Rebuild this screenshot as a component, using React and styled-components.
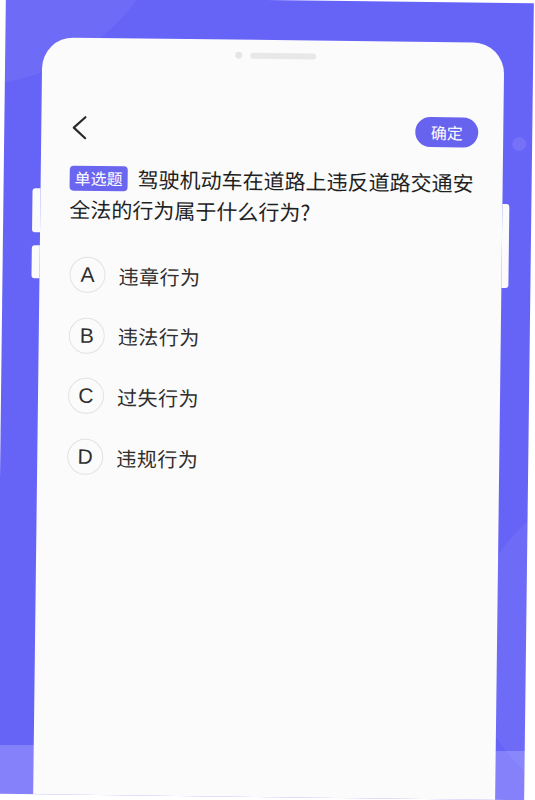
import React from 'react';
import styled, { createGlobalStyle } from 'styled-components';

const GlobalStyle = createGlobalStyle`
  html, body {
    margin: 0;
    padding: 0;
    background: #ffffff;
    overflow: hidden;
  }
  body {
    width: 535px;
    height: 800px;
  }
`

const Stage = styled.div`
  position: relative;
  width: 528px;
  height: 797px;
  margin-left: 1px;
  overflow: hidden;
  transform: rotate(0.7deg);
  transform-origin: 50% 50%;
  background:
    radial-gradient(circle 210px at -40px -120px, rgba(255,255,255,0.05) 99.5%, transparent 100%),
    radial-gradient(circle 168px at 640px 643px, rgba(255,255,255,0.05) 99.5%, transparent 100%),
    linear-gradient(180deg, #6663f7 0, #6663f7 748px, #8481fa 748px, #8481fa 100%);
`

const Bubble = styled.span`
  position: absolute;
  left: 508px;
  top: 134px;
  width: 14px;
  height: 14px;
  border-radius: 50%;
  background: #7572f8;
`

const Phone = styled.div`
  position: relative;
  margin-left: 37px;
  margin-top: 40px;
  width: 462px;
  height: 820px;
  border-radius: 31px 31px 0 0;
  background: #fbfbfb;
  font-family: "Noto Sans CJK SC", "Noto Sans", sans-serif;
  display: flex;
  flex-direction: column;
`

const SideKey = styled.span`
  position: absolute;
  top: ${p => p.top}px;
  height: ${p => p.h}px;
  width: ${p => p.side === 'left' ? 8 : 7}px;
  ${p => p.side === 'left' ? 'left: -8px;' : 'right: -7px;'}
  border-radius: ${p => p.side === 'left' ? '3px 0 0 3px' : '0 3px 3px 0'};
  background: #fbfbfb;
`

const Notch = styled.div`
  display: flex;
  align-items: center;
  justify-content: center;
  gap: 8px;
  padding-top: 12px;
  padding-left: 4px;
  height: 7px;
`

const Camera = styled.span`
  width: 7px;
  height: 7px;
  border-radius: 50%;
  background: #e6e6e6;
`

const Speaker = styled.span`
  width: 66px;
  height: 6px;
  border-radius: 3px;
  background: #e8e8e8;
`

const Header = styled.div`
  display: flex;
  align-items: center;
  justify-content: space-between;
  margin-top: 56px;
  padding: 0 25px 0 30px;
  height: 30px;
`

const BackButton = styled.button`
  display: flex;
  align-items: center;
  padding: 0;
  border: none;
  background: none;
  width: 16px;
  height: 24px;
`

const ConfirmButton = styled.button`
  width: 63px;
  height: 30px;
  border: none;
  border-radius: 15px;
  background: #6763ee;
  color: #ffffff;
  font-family: "Noto Sans CJK SC", sans-serif;
  font-size: 16px;
  line-height: 30px;
  padding: 0;
`

const Question = styled.div`
  margin-top: 20px;
  padding: 0 25px 0 29px;
  font-size: 21px;
  line-height: 31px;
  color: #1f1f1f;
`

const Tag = styled.span`
  display: inline-block;
  vertical-align: 2px;
  height: 25px;
  line-height: 25px;
  padding: 0 5px;
  margin-right: 10px;
  border-radius: 4px;
  background: #6b66f0;
  color: #ffffff;
  font-size: 16px;
`

const Options = styled.div`
  display: flex;
  flex-direction: column;
  gap: 24.7px;
  margin-top: 32px;
  padding-left: 30px;
`

const Option = styled.div`
  display: flex;
  align-items: center;
  gap: 13px;
  height: 36px;
`

const Letter = styled.span`
  box-sizing: border-box;
  display: flex;
  align-items: center;
  justify-content: center;
  width: 36px;
  height: 36px;
  border-radius: 50%;
  border: 1.5px solid #e2e2e2;
  font-family: "Liberation Sans", "Noto Sans", sans-serif;
  font-size: 21px;
  color: #2e2e2e;
`

const OptionText = styled.span`
  font-size: 20px;
  letter-spacing: 0.5px;
  color: #2e2e2e;
`

const options = [
  { key: 'A', text: '违章行为' },
  { key: 'B', text: '违法行为' },
  { key: 'C', text: '过失行为' },
  { key: 'D', text: '违规行为' },
];

function App() {
  return (
    <>
      <GlobalStyle />
      <Stage>
        <Bubble />
        <Phone>
          <SideKey side="left" top={151} h={44} />
          <SideKey side="left" top={208} h={33} />
          <SideKey side="right" top={161} h={84} />
          <Notch>
            <Camera />
            <Speaker />
          </Notch>
          <Header>
            <BackButton>
              <svg width="16" height="24" viewBox="0 0 16 24" fill="none">
                <path d="M14 1.5 L2.5 12 L14 22.5" stroke="#2a2a2a" strokeWidth="2.2" strokeLinecap="round" strokeLinejoin="round" />
              </svg>
            </BackButton>
            <ConfirmButton>确定</ConfirmButton>
          </Header>
          <Question>
            <Tag>单选题</Tag>驾驶机动车在道路上违反道路交通安全法的行为属于什么行为?
          </Question>
          <Options>
            {options.map(o => (
              <Option key={o.key}>
                <Letter>{o.key}</Letter>
                <OptionText>{o.text}</OptionText>
              </Option>
            ))}
          </Options>
        </Phone>
      </Stage>
    </>
  );
}

export default App;
